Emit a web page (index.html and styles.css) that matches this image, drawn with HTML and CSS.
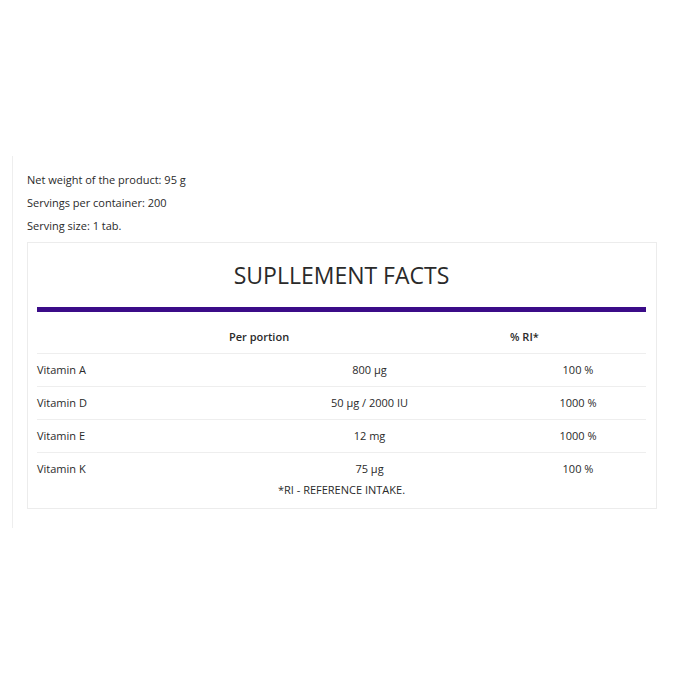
FILE: index.html
```html
<!DOCTYPE html>
<html>
<head>
<meta charset="utf-8">
<link rel="stylesheet" href="styles.css">
</head>
<body>
<div class="wrap">
  <p class="info">Net weight of the product: 95 g</p>
  <p class="info">Servings per container: 200</p>
  <p class="info">Serving size: 1 tab.</p>
  <div class="facts">
    <h2 class="title">SUPLLEMENT FACTS</h2>
    <div class="bar"></div>
    <table class="tbl">
      <colgroup><col class="c1"><col class="c2"><col class="c3"></colgroup>
      <thead>
        <tr><th></th><th>Per portion</th><th>% RI*</th></tr>
      </thead>
      <tbody>
        <tr><td>Vitamin A</td><td>800 µg</td><td>100 %</td></tr>
        <tr><td>Vitamin D</td><td>50 µg / 2000 IU</td><td>1000 %</td></tr>
        <tr><td>Vitamin E</td><td>12 mg</td><td>1000 %</td></tr>
        <tr class="last"><td>Vitamin K</td><td>75 µg</td><td>100 %</td></tr>
      </tbody>
    </table>
    <p class="note">*RI - REFERENCE INTAKE.</p>
  </div>
</div>
</body>
</html>
```
FILE: styles.css
```css
html, body {
  margin: 0;
  padding: 0;
  background: #fff;
}
body {
  font-family: "Open Sans", "Liberation Sans", sans-serif;
  font-size: 11px;
  color: #2a2a2a;
}
.wrap {
  margin: 156px 0 0 12px;
  border-left: 1px solid #eeeeee;
  padding: 12px 0 20px 14px;
  height: 340px;
}
.info {
  margin: 0;
  line-height: 23px;
}
.facts {
  margin-top: 5px;
  border: 1px solid #ececec;
  box-sizing: content-box;
  padding: 0 10px 12px 9px;
  width: 609px;
}
.title {
  margin: 0;
  padding-top: 18px;
  font-size: 23px;
  line-height: 28px;
  font-weight: 400;
  text-align: center;
  color: #2a2a2a;
}
.bar {
  margin-top: 18px;
  height: 5px;
  background: #3b0c88;
}
.tbl {
  width: 609px;
  table-layout: fixed;
  border-collapse: collapse;
}
.c1 { width: 192px; }
.c2 { width: 281px; }
.c3 { width: 136px; }
.tbl th {
  padding: 18px 0 10px;
  line-height: 13px;
  font-weight: 600;
  text-align: left;
  border-bottom: 1px solid #eeeeee;
}
.tbl td {
  height: 30px;
  padding: 0 0 2px;
  line-height: 13px;
  text-align: center;
  border-bottom: 1px solid #eeeeee;
}
.tbl td:first-child {
  text-align: left;
}
.tbl tr.last td {
  border-bottom: none;
}
.note {
  margin: -1px 0 0;
  line-height: 12px;
  text-align: center;
}
```
